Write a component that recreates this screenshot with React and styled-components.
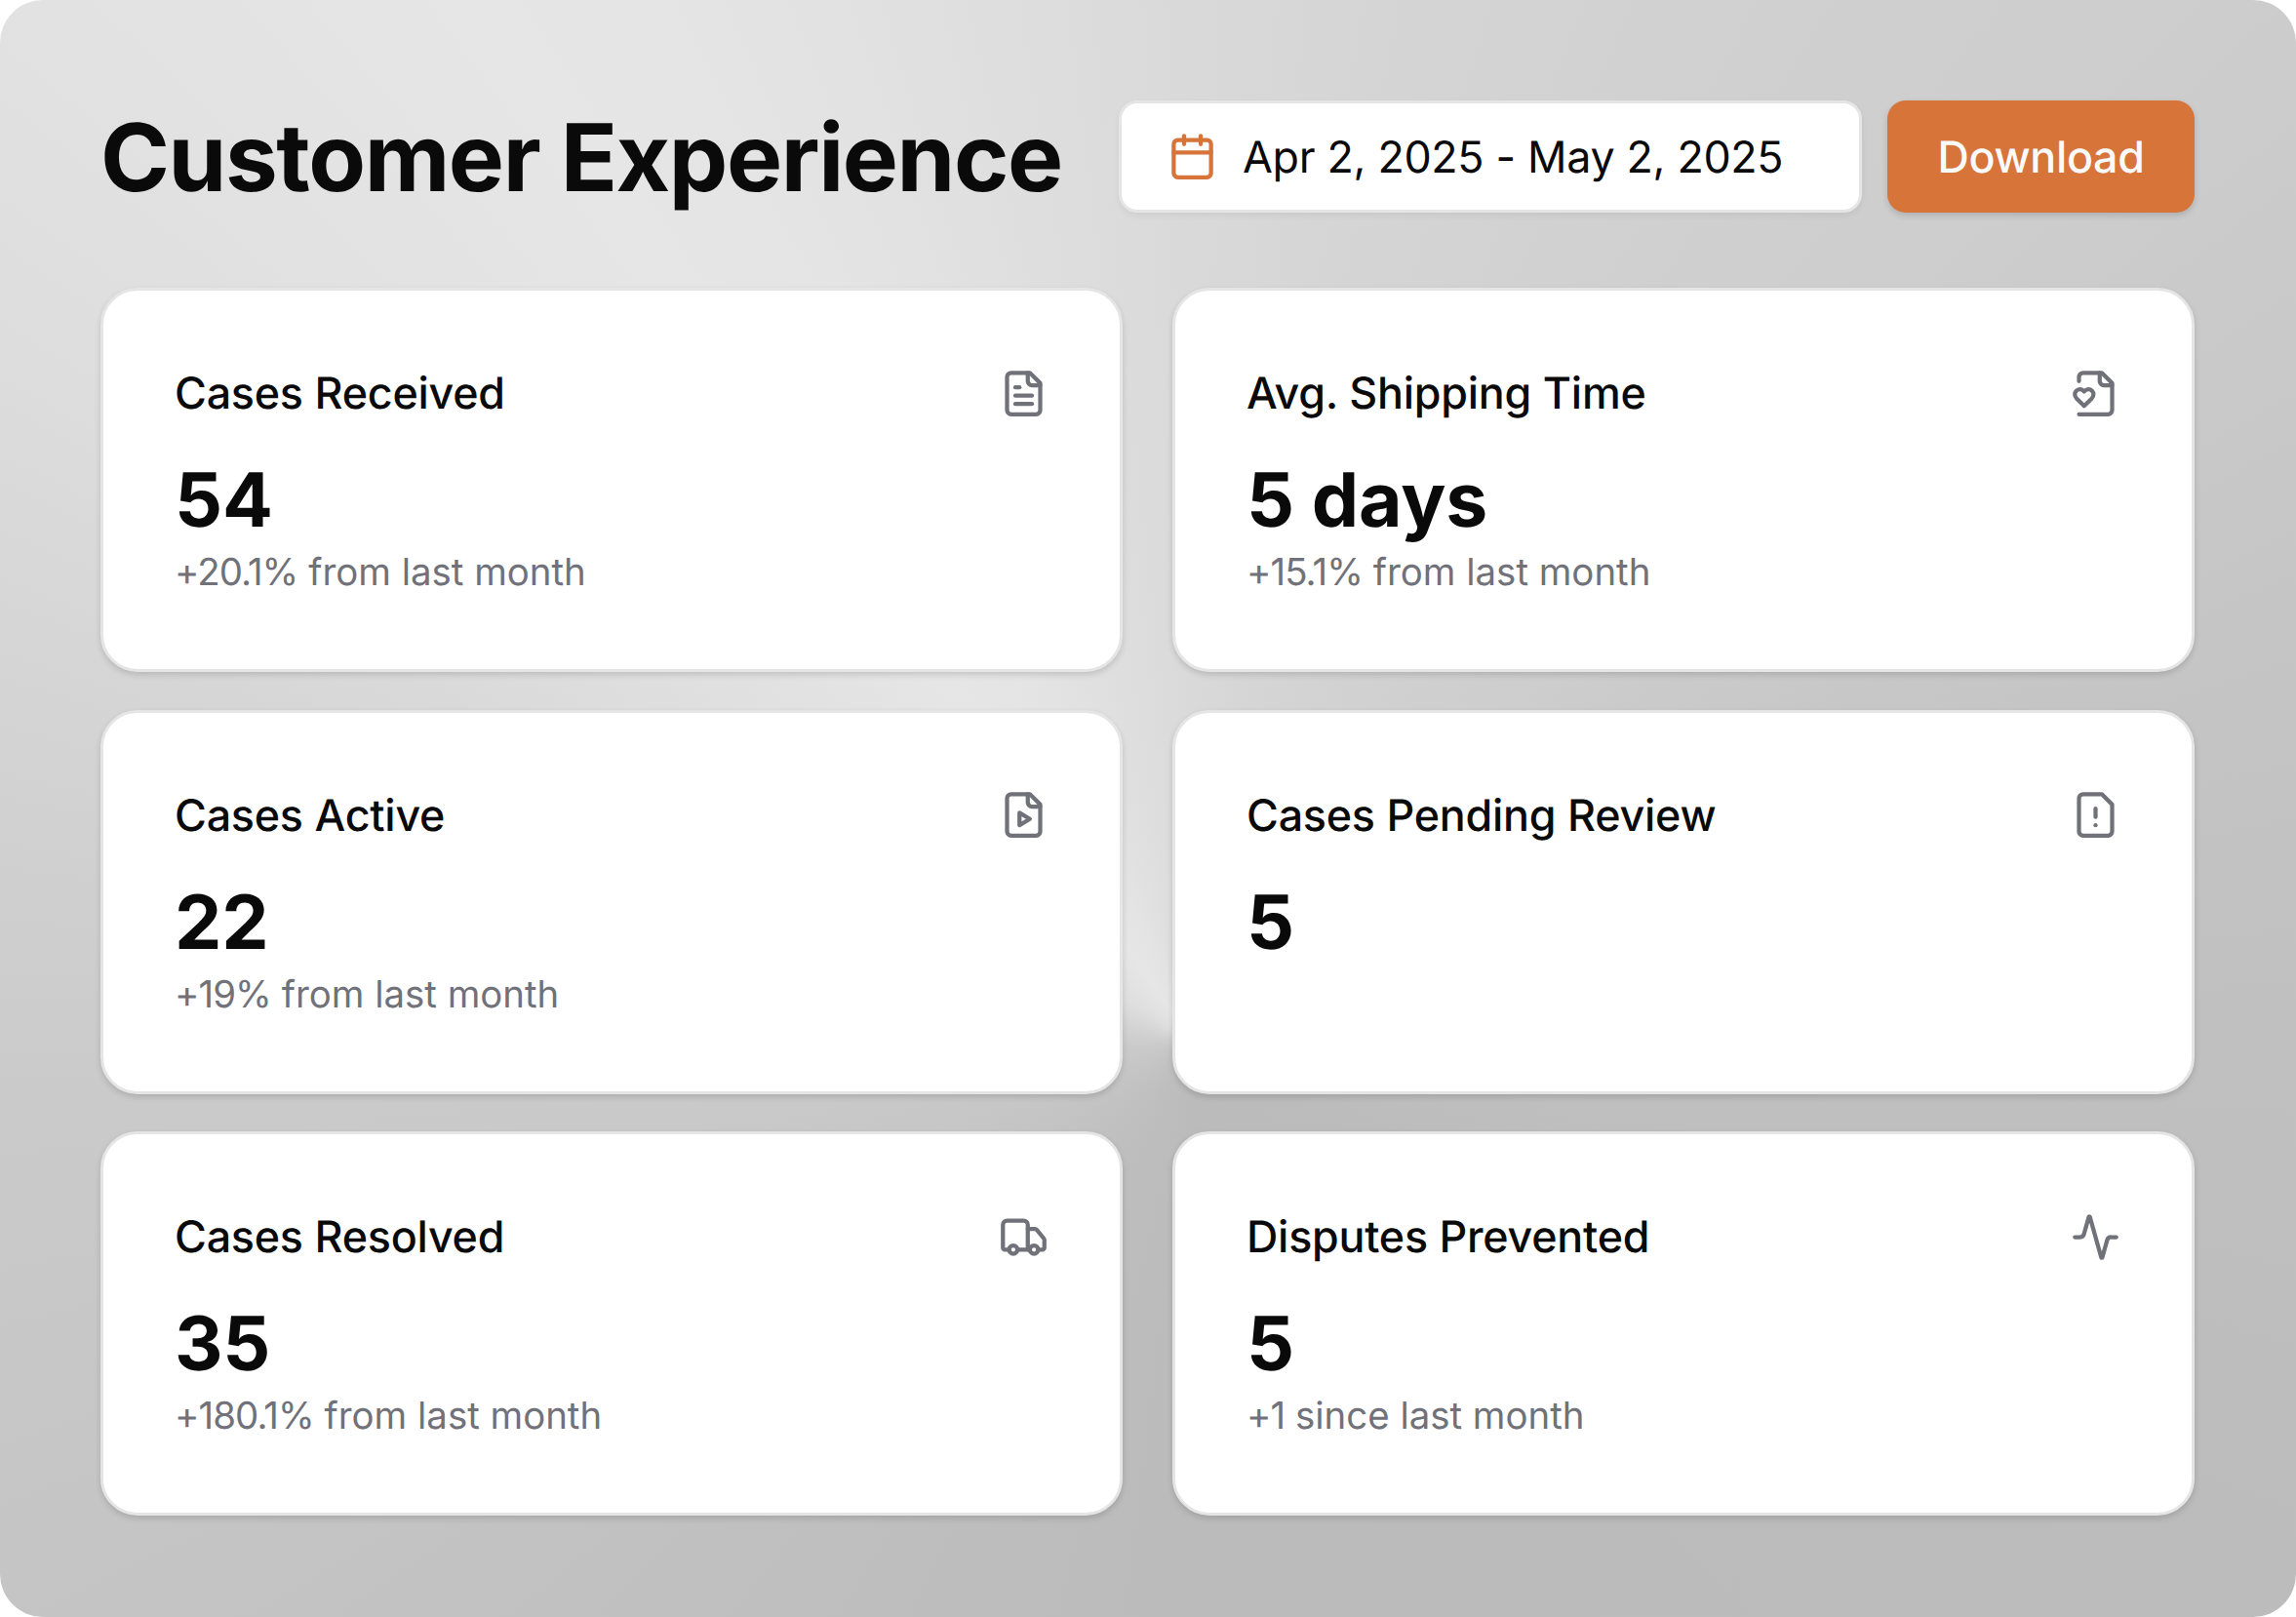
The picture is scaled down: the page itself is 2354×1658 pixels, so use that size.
import React from "react";
import styled, { createGlobalStyle } from "styled-components";
import {
  Activity,
  Calendar,
  Truck,
} from "lucide-react";

const GlobalStyle = createGlobalStyle`
  * {
    box-sizing: border-box;
    margin: 0;
    padding: 0;
  }
  body {
    background: #ffffff;
    color: #0a0a0a;
    font-family: Inter, "Liberation Sans", sans-serif;
    font-optical-sizing: none;
    text-rendering: geometricPrecision;
  }
  button {
    text-rendering: inherit;
  }
`;

//icons
const strokeProps = {
  viewBox: "0 0 24 24",
  fill: "none",
  stroke: "currentColor",
  strokeWidth: 2,
  strokeLinecap: "round",
  strokeLinejoin: "round",
};

function FileHeart() {
  return (
    <svg {...strokeProps}>
      <path d="M4 22h14a2 2 0 0 0 2-2V7l-5-5H6a2 2 0 0 0-2 2v2" />
      <path d="M14 2v4a2 2 0 0 0 2 2h4" />
      <path d="M10.29 10.7a2.43 2.43 0 0 0-2.66-.52c-.29.12-.56.3-.78.53l-.35.34-.35-.34a2.43 2.43 0 0 0-2.65-.53c-.3.12-.56.3-.79.53-.95.94-1 2.53.2 3.74L6.5 18l3.6-3.55c1.2-1.21 1.14-2.8.19-3.74Z" />
    </svg>
  );
}

function FilePlay() {
  return (
    <svg {...strokeProps}>
      <path d="M15 2H6a2 2 0 0 0-2 2v16a2 2 0 0 0 2 2h12a2 2 0 0 0 2-2V7Z" />
      <path d="M14 2v4a2 2 0 0 0 2 2h4" />
      <path d="m10 11 5 3-5 3v-6Z" />
    </svg>
  );
}

function FileLines() {
  return (
    <svg {...strokeProps}>
      <path d="M15 2H6a2 2 0 0 0-2 2v16a2 2 0 0 0 2 2h12a2 2 0 0 0 2-2V7Z" />
      <path d="M14 2v4a2 2 0 0 0 2 2h4" />
      <path d="M10 9H8" />
      <path d="M16 13H8" />
      <path d="M16 17H8" />
    </svg>
  );
}

function FileAlert() {
  return (
    <svg {...strokeProps}>
      <path d="M15 2H6a2 2 0 0 0-2 2v16a2 2 0 0 0 2 2h12a2 2 0 0 0 2-2V7Z" />
      <path d="M12 9v4" />
      <path d="M12 17h.01" />
    </svg>
  );
}

const stats = [
  { title: "Cases Received", value: "54", change: "+20.1%", period: "from last month", Icon: FileLines },
  { title: "Avg. Shipping Time", value: "5 days", change: "+15.1%", period: "from last month", Icon: FileHeart },
  { title: "Cases Active", value: "22", change: "+19%", period: "from last month", Icon: FilePlay },
  { title: "Cases Pending Review", value: "5", Icon: FileAlert },
  { title: "Cases Resolved", value: "35", change: "+180.1%", period: "from last month", Icon: Truck },
  { title: "Disputes Prevented", value: "5", change: "+1", period: "since last month", Icon: Activity },
];

function App() {
  return (
    <>
      <GlobalStyle />
      <AppStyled>
        <HeaderStyled>
          <h1>Customer Experience</h1>
          <DateButton>
            <Calendar />
            <span>Apr 2, 2025 - May 2, 2025</span>
          </DateButton>
          <DownloadButton>Download</DownloadButton>
        </HeaderStyled>
        <StatsGrid>
          {stats.map(({ title, value, change, period, Icon }) => (
            <CardStyled key={title}>
              <div className="card-head">
                <h3>{title}</h3>
                <Icon />
              </div>
              <p className="value">{value}</p>
              {change && (
                <p className="note">
                  <span>{change}</span> {period}
                </p>
              )}
            </CardStyled>
          ))}
        </StatsGrid>
      </AppStyled>
    </>
  );
}

const AppStyled = styled.main`
  width: 2354px;
  height: 1658px;
  padding: 103px 104px 103px 103px;
  border-radius: 44px;
  background: conic-gradient(
    from 0deg at 1225px 1070px,
    #d9d9d9 0deg,
    #d5d5d5 10deg,
    #d1d1d1 25deg,
    #cdcdcd 45deg,
    #c8c8c8 60deg,
    #c4c4c4 72deg,
    #c0c0c0 90deg,
    #bcbcbc 115deg,
    #bbbbbb 180deg,
    #bebebe 211deg,
    #c2c2c2 234deg,
    #c6c6c6 250deg,
    #cacaca 267deg,
    #d0d0d0 279deg,
    #d7d7d7 291deg,
    #dedede 302deg,
    #e2e2e2 312deg,
    #e6e6e6 325deg,
    #e4e4e4 335deg,
    #dfdfdf 347deg,
    #d9d9d9 360deg
  );
`;

const HeaderStyled = styled.header`
  display: flex;
  align-items: center;
  height: 115px;
  margin-bottom: 77px;
  h1 {
    flex: 1;
    padding-top: 4px;
    font-size: 96px;
    font-weight: 700;
    letter-spacing: -1.4px;
    line-height: 115px;
    white-space: nowrap;
  }
`;

const DateButton = styled.button`
  display: flex;
  align-items: center;
  width: 762px;
  height: 115px;
  padding: 0 47px;
  margin-right: 26px;
  border: 3px solid #e5e5e5;
  border-radius: 19px;
  background: #ffffff;
  color: #0a0a0a;
  font-family: inherit;
  font-size: 44.8px;
  letter-spacing: -0.32px;
  white-space: nowrap;
  box-shadow: 0 3px 6px rgba(0, 0, 0, 0.06);
  svg {
    width: 51px;
    height: 51px;
    margin-right: 26px;
    color: #d67439;
  }
`;

const DownloadButton = styled.button`
  width: 315px;
  height: 115px;
  border: none;
  border-radius: 19px;
  background: #d67439;
  color: #fafafa;
  font-family: inherit;
  font-size: 44.8px;
  font-weight: 500;
  letter-spacing: -0.3px;
  box-shadow: 0 3px 6px rgba(0, 0, 0, 0.15);
`;

const StatsGrid = styled.section`
  display: grid;
  grid-template-columns: 1fr 1fr;
  grid-auto-rows: 394px;
  gap: 38.5px 51px;
`;

const CardStyled = styled.article`
  padding: 73px;
  border: 3px solid #e5e5e5;
  border-radius: 38px;
  background: #ffffff;
  box-shadow: 0 3px 6px rgba(0, 0, 0, 0.14);
  .card-head {
    display: flex;
    align-items: center;
    justify-content: space-between;
    height: 64px;
    margin-bottom: 27px;
  }
  h3 {
    font-size: 44.8px;
    font-weight: 500;
    letter-spacing: -0.22px;
    line-height: 64px;
  }
  svg {
    width: 51px;
    height: 51px;
    color: #71717a;
  }
  .value {
    font-size: 76.8px;
    font-weight: 700;
    letter-spacing: -0.2px;
    line-height: 102px;
  }
  .note {
    margin-top: -2px;
    color: #71717a;
    font-size: 38.4px;
    line-height: 51px;
    span {
      letter-spacing: -0.9px;
    }
  }
`;

export default App;
